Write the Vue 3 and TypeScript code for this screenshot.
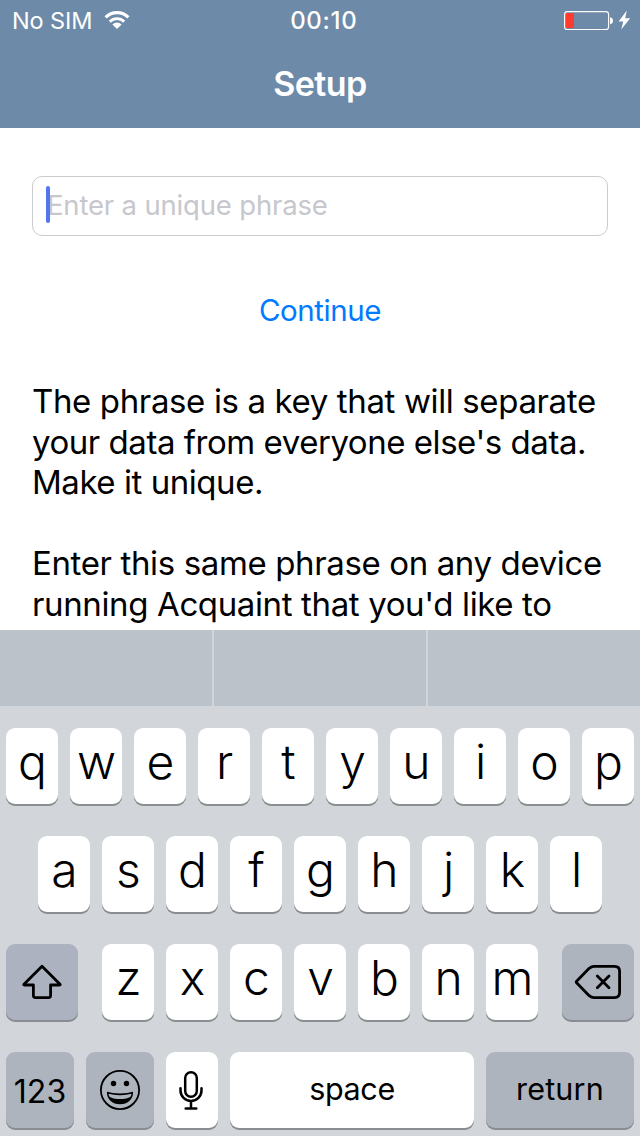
<script setup lang="ts">
interface Line {
  text: string
  spacing: number
}

const lines: Line[] = [
  { text: 'The phrase is a key that will separate', spacing: -0.37 },
  { text: "your data from everyone else's data.", spacing: -0.46 },
  { text: 'Make it unique.', spacing: -0.45 },
  { text: '', spacing: 0 },
  { text: 'Enter this same phrase on any device', spacing: -0.37 },
  { text: "running Acquaint that you'd like to", spacing: -0.37 },
]

const topRow = 'qwertyuiop'.split('')
const homeRow = 'asdfghjkl'.split('')
const bottomRow = 'zxcvbnm'.split('')
</script>

<template>
  <div class="screen">
    <header class="header">
      <div class="status">
        <div class="carrier">
          <span class="carrier-name">No SIM</span>
          <svg class="wifi" width="26" height="20" viewBox="0 0 26 20" fill="none" stroke="#fff">
            <path d="M1.6 7.3a16.2 16.2 0 0 1 22.8 0" stroke-width="3.2" />
            <path d="M5.8 11.6a10.2 10.2 0 0 1 14.4 0" stroke-width="2.9" />
            <path d="M8.4 14.5a6.500 6.500 0 0 1 9.200 0L13 19.100z" fill="#fff" stroke="none" />
          </svg>
        </div>
        <span class="time">00:10</span>
        <div class="power">
          <svg width="68" height="20" viewBox="0 0 68 20">
            <rect x="0.6" y="0.6" width="44" height="17.9" rx="2.8" fill="none" stroke="#fff" stroke-width="1.1" />
            <rect x="1.8" y="2" width="8.2" height="15" rx="0.8" fill="#ff3b30" />
            <path d="M46 6.200c2.200 .3 3 1.700 3 3.500s-.8 3.200-3 3.500z" fill="#fff" />
            <path d="M62.800 -.6L54.600 10.400H59.300L57.200 18.400L66.200 7.300H61.200z" fill="#fff" />
          </svg>
        </div>
      </div>
      <h1 class="title">Setup</h1>
    </header>

    <main class="content">
      <div class="field">
        <span class="placeholder">Enter a unique phrase</span>
        <i class="caret"></i>
      </div>
      <button class="continue" type="button">Continue</button>
      <div class="copy">
        <div v-for="(line, i) in lines" :key="i" class="line" :style="{ letterSpacing: line.spacing + 'px' }">{{ line.text }}</div>
      </div>
    </main>

    <section class="keyboard">
      <div class="suggestions">
        <div class="suggestion"></div>
        <div class="suggestion"></div>
        <div class="suggestion"></div>
      </div>
      <div class="rows">
        <div class="row">
          <div v-for="k in topRow" :key="k" class="key">{{ k }}</div>
        </div>
        <div class="row">
          <div v-for="k in homeRow" :key="k" class="key">{{ k }}</div>
        </div>
        <div class="row spread">
          <div class="key icon shift">
            <svg width="40" height="36" viewBox="0 0 40 36" fill="none" stroke="#000" stroke-width="2.8" stroke-linejoin="round">
              <path d="M20 2.200L2 20.200Q1.400 21 2.300 21H11.400V31.600Q11.400 33.600 13.400 33.600H26.600Q28.600 33.600 28.600 31.600V21H37.700Q38.600 21 38 20.200Z" />
            </svg>
          </div>
          <div class="letters">
            <div v-for="k in bottomRow" :key="k" class="key">{{ k }}</div>
          </div>
          <div class="key icon delete">
            <svg width="48" height="36" viewBox="0 0 48 36" fill="none" stroke="#000" stroke-width="2.800" stroke-linejoin="round" stroke-linecap="round">
              <path d="M2.600 17.200L15.200 4.300Q17.600 2.400 20 2.400H40.600Q45.600 2.400 45.600 7.400V28.600Q45.600 33.600 40.600 33.600H20Q17.600 33.600 15.200 31.700L2.600 18.800Q1.800 18 2.600 17.200Z" />
              <path d="M23.300 12.100L35 23.800M35 12.100L23.300 23.800" />
            </svg>
          </div>
        </div>
        <div class="row">
          <div class="key word numbers">123</div>
          <div class="key icon emoji">
            <svg width="40" height="40" viewBox="0 0 40 40">
              <circle cx="20" cy="20" r="19.100" fill="none" stroke="#000" stroke-width="1.800" />
              <circle cx="13.500" cy="13.500" r="2.700" />
              <circle cx="26.500" cy="13.500" r="2.700" />
              <path d="M7.700 22.600C13 24.900 27 24.900 32.300 22.600C32.300 29 27 33.400 20 33.400S7.700 29 7.700 22.600Z" fill="none" stroke="#000" stroke-width="1.600" stroke-linejoin="round" />
              <path d="M8.600 26.200C14 30 26 30 31.400 26.200C29.500 31 25 33.700 20 33.700S10.500 31 8.600 26.200Z" />
            </svg>
          </div>
          <div class="key icon mic">
            <svg width="24" height="40" viewBox="0 0 24 40" fill="none" stroke="#000" stroke-width="2.500" stroke-linecap="round">
              <rect x="5.200" y="2.200" width="11.600" height="24.600" rx="5.800" />
              <path d="M.5 18.200V20.500A10.500 10.500 0 0 0 21.500 20.500V18.200M11 31V38M5.700 38.500H16.300" />
            </svg>
          </div>
          <div class="key word space">space</div>
          <div class="key word return">return</div>
        </div>
      </div>
    </section>
  </div>
</template>

<style>
body {
  margin: 0;
}
</style>

<style scoped>
.screen {
  display: flex;
  flex-direction: column;
  width: 640px;
  height: 1136px;
  overflow: hidden;
  background: #fff;
  color: #000;
  font-family: 'Inter', 'Liberation Sans', sans-serif;
}

.header {
  flex: none;
  height: 128px;
  background: #6d8aa8;
  color: #fff;
}

.status {
  display: grid;
  grid-template-columns: 1fr auto 1fr;
  height: 40px;
  font-size: 24px;
  line-height: 42px;
}

.carrier {
  display: flex;
  align-items: center;
  gap: 11.5px;
  height: 40px;
  padding-left: 12px;
}

.carrier-name {
  padding-top: 1px;
  font-size: 23.5px;
  letter-spacing: -0.1px;
}

.wifi {
  display: block;
}

.time {
  padding-left: 7.5px;
  font-weight: 500;
  letter-spacing: 0.7px;
}

.power {
  display: flex;
  align-items: center;
  justify-content: flex-end;
  height: 40px;
  box-sizing: border-box;
  padding: 1px 8px 0 0;
}

.power svg {
  display: block;
  overflow: visible;
}

.title {
  margin: 0;
  font-size: 34px;
  font-weight: 600;
  line-height: 88px;
  letter-spacing: -0.55px;
  text-align: center;
}

.content {
  flex: none;
  display: flex;
  flex-direction: column;
  box-sizing: border-box;
  height: 502px;
  padding: 48px 32px 0;
  overflow: hidden;
}

.field {
  position: relative;
  flex: none;
  box-sizing: border-box;
  height: 60px;
  padding: 0 14px;
  border: 1px solid #cbcbcb;
  border-radius: 10px;
}

.placeholder {
  display: block;
  font-size: 27.5px;
  line-height: 56px;
  letter-spacing: -0.17px;
  color: #c7c7cd;
}

.caret {
  position: absolute;
  left: 13px;
  top: 9px;
  width: 4px;
  height: 37px;
  border-radius: 2px;
  background: #5175f0;
}

.continue {
  align-self: center;
  margin: 56px 0 0;
  padding: 0;
  border: 0;
  background: none;
  color: #007aff;
  font-family: inherit;
  font-size: 29.5px;
  line-height: 36px;
  letter-spacing: -0.42px;
}

.copy {
  margin-top: 53px;
  font-size: 33px;
}

.line {
  height: 40.57px;
  line-height: 40.57px;
  white-space: nowrap;
}

.keyboard {
  flex: none;
  height: 506px;
  background: #d2d5da;
}

.suggestions {
  display: grid;
  grid-template-columns: repeat(3, 1fr);
  gap: 2px;
  height: 76px;
}

.suggestion {
  background: #bbc2ca;
}

.rows {
  display: flex;
  flex-direction: column;
  gap: 32px;
  padding: 22px 6px 0;
}

.row,
.letters {
  display: flex;
  justify-content: center;
  gap: 12px;
}

.spread {
  justify-content: space-between;
}

.key {
  box-sizing: border-box;
  width: 52px;
  height: 76px;
  padding: 0 0 9px 1px;
  border-radius: 9px;
  background: #fff;
  box-shadow: 0 2px 0 #898c90;
  font-size: 48px;
  font-weight: 360;
  line-height: 67px;
  text-align: center;
}

.icon {
  display: flex;
  align-items: center;
  justify-content: center;
  padding: 0;
}

.icon svg {
  display: block;
  flex: none;
  overflow: visible;
}

.shift {
  width: 72px;
  background: #acb2bf;
}

.delete {
  width: 72px;
  background: #adb4be;
}

.word {
  padding: 0 0 2px;
  font-size: 30.5px;
  font-weight: 400;
  line-height: 74px;
}

.numbers {
  width: 68px;
  padding: 4px 0 0;
  background: #adb4be;
  font-size: 32px;
  line-height: 72px;
}

.emoji {
  width: 68px;
  background: #adb4be;
}

.space {
  width: 244px;
  letter-spacing: -0.35px;
}

.return {
  width: 148px;
  background: #adb4be;
  letter-spacing: 0.2px;
}
</style>
